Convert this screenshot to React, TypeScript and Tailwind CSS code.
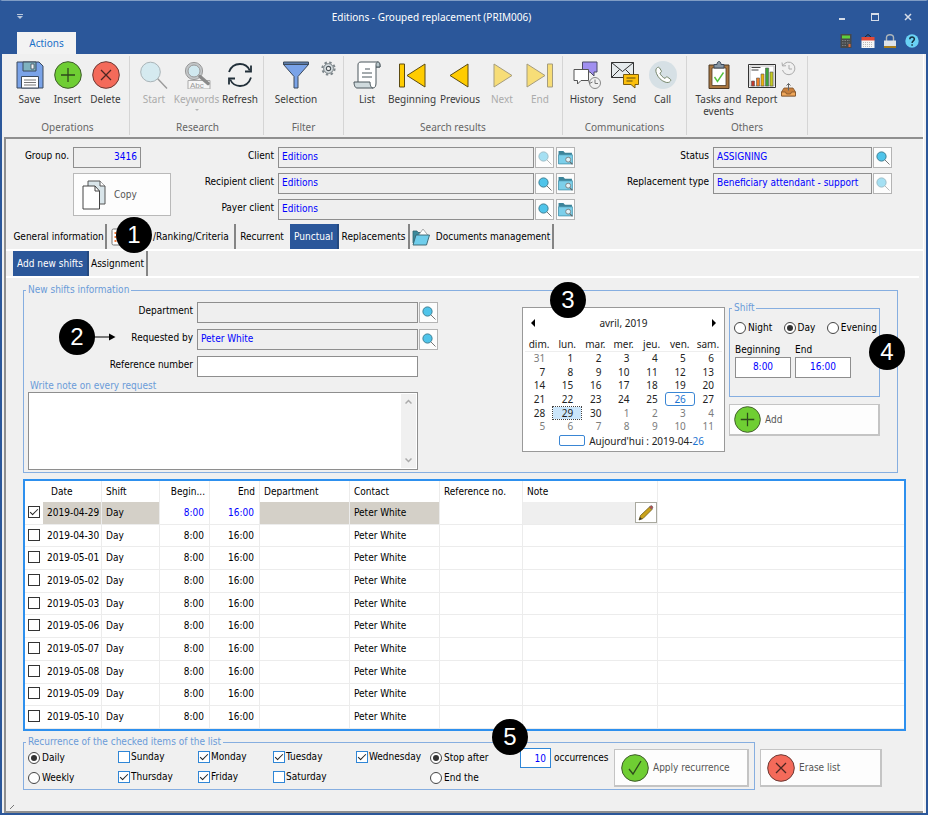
import { useState } from "react";
import type { ReactNode } from "react";

/* ---------- icons ---------- */

function Svg({ size = 28, box = 28, faded = false, children }: { size?: number; box?: number; faded?: boolean; children: ReactNode }) {
  return (
    <svg width={size} height={size} viewBox={`0 0 ${box} ${box}`} fill="none" aria-hidden="true" className={faded ? "shrink-0 opacity-50" : "shrink-0"}>
      {children}
    </svg>
  );
}

const SaveIcon = () => (
  <Svg>
    <path d="M1 1h22l4 4v22H1z" fill="#7aa3e8" stroke="#3c4a5c" />
    <path d="M7 1h13v9H7z" fill="#7fb3c0" stroke="#3c4a5c" />
    <path d="M15 3h3v5h-3z" fill="#f0f5f6" stroke="#3c4a5c" strokeWidth=".8" />
    <path d="M5.500 15.500h17V27h-17z" fill="#fff" stroke="#3c4a5c" />
    <path d="M8 19h12M8 21.500h12M8 24h12" stroke="#777" />
  </Svg>
);

const PlusIcon = ({ size = 28 }: { size?: number }) => (
  <Svg size={size}>
    <circle cx="14" cy="14" r="13.300" fill="#6fce33" stroke="#3f5b2b" />
    <path d="M14 7v14M7 14h14" stroke="#2e4a1c" strokeWidth="1.300" />
  </Svg>
);

const CrossIcon = () => (
  <Svg>
    <circle cx="14" cy="14" r="13.300" fill="#f46a5a" stroke="#6b3a35" />
    <path d="M9 9l10 10M19 9L9 19" stroke="#4c2622" strokeWidth="1.300" />
  </Svg>
);

const CheckIcon = () => (
  <Svg>
    <circle cx="14" cy="14" r="13.300" fill="#6fce33" stroke="#3f5b2b" />
    <path d="M8 15l4 5 8-13" stroke="#2e4a1c" strokeWidth="1.300" />
  </Svg>
);

const MagnifierIcon = () => (
  <Svg>
    <path d="M17.500 17.500L27 27.500" stroke="#9a9a9a" strokeWidth="1.400" />
    <circle cx="10.500" cy="11" r="9.800" fill="#d5eaf0" stroke="#a9b4b8" />
  </Svg>
);

const KeywordsIcon = () => (
  <Svg>
    <circle cx="11" cy="10" r="8.600" fill="#c3c7c9" stroke="#999" />
    <circle cx="11" cy="10" r="6" fill="#d0e8ef" stroke="#999" />
    <path d="M5 19.500h22V28H5z" fill="#f6f6f6" stroke="#aaa" />
    <path d="M17 15.500l8 7" stroke="#8a8a8a" strokeWidth="3.500" strokeLinecap="round" />
    <text x="7" y="27" fontSize="8" fill="#9a9a9a" fontFamily="Liberation Sans">Abc</text>
  </Svg>
);

const RefreshIcon = () => (
  <Svg>
    <path d="M3 11C5 5.500 9 3 14 3c4.500 0 8 2.500 9.800 6.500M25 16.500C23 22.500 19 25 14 25c-4.500 0-8-2.500-9.800-6.500" stroke="#22303a" strokeWidth="1.800" />
    <path d="M25 4.500v6h-6M3 23.500v-6h6" stroke="#22303a" strokeWidth="1.800" />
  </Svg>
);

const FunnelIcon = () => (
  <Svg>
    <path d="M1.500 3.500L12 15.500V27h4V15.500L26.500 3.500z" fill="#7aa3e8" stroke="#3c4a5c" />
    <path d="M1.500 1h25v2.500h-25z" fill="#5d7ca8" stroke="#3c4a5c" />
  </Svg>
);

const GearIcon = () => (
  <Svg size={15} box={16}>
    <circle cx="8" cy="8" r="6.600" stroke="#7d868b" strokeWidth="2" strokeDasharray="2.600 2.580" />
    <circle cx="8" cy="8" r="5.200" fill="#d7dee1" stroke="#6c757a" />
    <circle cx="8" cy="8" r="2.300" fill="#f0f0f0" stroke="#4a5359" strokeWidth="1.200" />
  </Svg>
);

const ListIcon = () => (
  <Svg>
    <path d="M5 21V4c0-2 1-3 3-3h17c2 0 2 5 2 5h-4v16c0 3-1 5-3 5" fill="#fff" stroke="#4b565c" />
    <path d="M23 6V3.500C23 2 24 1 25 1s2 1 2 3v2z" fill="#b9c7cb" stroke="#4b565c" />
    <path d="M1 21h16c0 3 1 6 3 6H4c-2 0-3-3-3-6z" fill="#cfdadd" stroke="#4b565c" />
    <path d="M12 8h5M9 12h10M9 16h10" stroke="#4b565c" />
  </Svg>
);

const BackIcon = ({ bar = false }: { bar?: boolean }) => (
  <Svg>
    <path d={bar ? "M27 3v23L9 14.500z" : "M22 3v23L4 14.500z"} fill="#fc0" stroke="#5c4a10" />
    {bar && <path d="M1.500 3h5v23h-5z" fill="#fc0" stroke="#5c4a10" />}
  </Svg>
);

const ForwardIcon = ({ bar = false }: { bar?: boolean }) => (
  <Svg faded>
    <path d={bar ? "M1 3v23l18-11.500z" : "M6 3v23l18-11.500z"} fill="#fc0" stroke="#5c4a10" />
    {bar && <path d="M21.500 3h5v23h-5z" fill="#fc0" stroke="#5c4a10" />}
  </Svg>
);

const HistoryIcon = () => (
  <Svg>
    <path d="M9.500 1H24v10h-3v4l-4-4H9.500z" fill="#a08ff0" stroke="#4b4a66" />
    <path d="M1 8.500h14.500v11H8L4.500 23v-3.500H1z" fill="#fff" stroke="#555" />
    <circle cx="22" cy="22" r="5.500" fill="#f0f0f0" stroke="#888" />
    <path d="M22 18.500V22.500h3M15.500 19l1 3.500 3-1.500" stroke="#777" />
  </Svg>
);

const SendIcon = () => (
  <Svg>
    <path d="M.500 1.500h22v15H.500z" fill="#e6ebed" stroke="#333" />
    <path d="M.500 1.500l11 9 11-9M.500 16.500l8-8M22.500 16.500l-8-8" stroke="#333" />
    <path d="M12.500 13.500h15v10H24v3.500l-4-3.500h-7.500z" fill="#fbbf0c" stroke="#7a5c10" />
    <path d="M15.500 17h9M15.500 20h6" stroke="#5c4a10" />
  </Svg>
);

const CallIcon = () => (
  <Svg>
    <circle cx="14" cy="14" r="14" fill="#d6e0e5" />
    <path d="M8.500 6.500c-2 1-2 3.500-1 6 1.800 4.200 4.500 7 8.500 8.500 2.500 1 4.500.5 5.500-1 .5-.8.300-1.500-.400-2l-2.600-1.900c-.7-.4-1.300-.3-1.800.4l-.6.900c-2-.6-4.500-3.200-5.200-5.300l1-.7c.6-.5.700-1.100.3-1.800l-1.700-2.700c-.5-.7-1.200-.8-2-.4z" fill="#fff" stroke="#6a7a5c" strokeWidth=".9" />
  </Svg>
);

const TasksIcon = () => (
  <Svg>
    <path d="M4 4h20v23.500H4z" fill="#a9763f" stroke="#4f3a24" />
    <path d="M7 7h14v17.500H7z" fill="#fff" stroke="#4f3a24" strokeWidth=".8" />
    <path d="M9 7V3.500h3C12 1.500 13 .500 14 .500s2 1 2 3h3V7z" fill="#8796a3" stroke="#3c4a5c" />
    <path d="M9.500 16l3 4.500 6-9" stroke="#54c23c" strokeWidth="1.400" />
  </Svg>
);

const ReportIcon = () => (
  <Svg>
    <path d="M.500 3.500h27v23H.500z" fill="#fff" stroke="#333" />
    <path d="M2 5h24v20H2z" stroke="#bbb" />
    <path d="M3.500 6.500h9M3.500 9h7" stroke="#444" />
    <path d="M3.500 20h3v5h-3z" fill="#c0392b" stroke="#555" strokeWidth=".6" />
    <path d="M8.500 17h3v8h-3z" fill="#ee7d22" stroke="#555" strokeWidth=".6" />
    <path d="M13 13h3v12h-3z" fill="#f0b20c" stroke="#555" strokeWidth=".6" />
    <path d="M17.500 7h3.200v18h-3.200z" fill="#3da33b" stroke="#555" strokeWidth=".6" />
    <path d="M22 11h3v14h-3z" fill="#c6cc1f" stroke="#555" strokeWidth=".6" />
  </Svg>
);

const ClockIcon = () => (
  <Svg size={15} box={15}>
    <path d="M2 4.500A6.300 6.300 0 1 1 1.500 9" stroke="#aaa" />
    <path d="M1 1.500L1.500 5l3.500-.3M8 4v4h3" stroke="#aaa" />
  </Svg>
);

const OutboxIcon = () => (
  <Svg size={15} box={15}>
    <path d="M3 6h9l2.500 4v4H.500v-4z" fill="#c9803c" stroke="#7d5228" strokeWidth=".8" />
    <path d="M.500 10h4l1 2h4l1-2h4v4H.500z" fill="#f0a75a" stroke="#7d5228" strokeWidth=".8" />
    <path d="M7.500 8.500V1.500M5.500 3.500l2-2 2 2" stroke="#666" />
  </Svg>
);

const SearchIcon = ({ faded = false }: { faded?: boolean }) => (
  <Svg size={14} box={14} faded={faded}>
    <path d="M8.500 8.500L13.500 13.500" stroke="#777" />
    <circle cx="5.500" cy="5.500" r="4.600" fill="#4fc4ea" stroke="#3c7f94" />
  </Svg>
);

const FolderSearchIcon = () => (
  <Svg size={15} box={14}>
    <path d="M.500 1h4.500l1.500 1.500h6.500v10.500H.500z" fill="#3c8399" />
    <path d="M.500 4.500h13v8.500H.500z" fill="#7ccfea" stroke="#4a94aa" strokeWidth=".7" />
    <circle cx="9.500" cy="9" r="2.300" fill="#e4f3f8" stroke="#777" strokeWidth=".8" />
    <path d="M11.200 11l2.300 2.500" stroke="#666" />
  </Svg>
);

const OpenFolderIcon = () => (
  <Svg size={18} box={18}>
    <path d="M1 3h4l1 1.500h7V15H1z" fill="#3b8a9c" stroke="#2d6270" strokeWidth=".8" />
    <path d="M6 8l5-7 5.500 7z" fill="#fff" stroke="#999" strokeWidth=".8" />
    <path d="M4 7h13.500L14.500 17H1z" fill="#6fcdeb" stroke="#37606c" strokeWidth=".9" />
  </Svg>
);

const CopyIcon = () => (
  <svg width="24" height="30" viewBox="0 0 24 30" fill="none" aria-hidden="true">
    <path d="M6 1h12l5 5v18H6z" fill="#d9e5ea" stroke="#555" />
    <path d="M18 1v5h5" fill="#fff" stroke="#555" />
    <path d="M1 6h12l4.500 5v18H1z" fill="#fff" stroke="#444" />
    <path d="M13 6v5h4.500" stroke="#444" />
  </svg>
);

const PencilIcon = () => (
  <Svg size={16} box={16}>
    <path d="M1 15l1.500-4.500L11.500 2l2.500 2.500L5 13.500z" fill="#c9a21c" stroke="#6e5a18" strokeWidth=".8" />
    <path d="M11.500 2l1.200-1.200c1-.6 2.700 1 2 2.200L13.800 4.200z" fill="#c84a48" stroke="#666" strokeWidth=".8" />
    <path d="M1 15l1-3 2 2z" fill="#333" />
  </Svg>
);

const CalculatorIcon = () => (
  <Svg size={14} box={14}>
    <path d="M1.500 0h11v14h-11z" fill="#46494a" />
    <path d="M3 1.500h8v3H3z" fill="#5fd03a" />
    <path d="M3 6.500h8M3 9h8M3 11.500h5" stroke="#7d8284" strokeDasharray="1.500 1" />
    <path d="M9.500 10h2v3h-2z" fill="#e0693a" />
  </Svg>
);

const CalendarIcon = () => (
  <Svg size={14} box={14}>
    <path d="M4 3l3-2.500L10 3" stroke="#222" />
    <path d="M.500 3h13v4H.500z" fill="#e04a38" />
    <path d="M.500 6.500h13V14H.500z" fill="#f5f5f5" />
    <path d="M2 8.500h10M2 10.500h10M2 12.500h10" stroke="#bbb" strokeDasharray="1 1" />
  </Svg>
);

const LockIcon = () => (
  <Svg size={14} box={14}>
    <path d="M3.500 7V3.500C3.500 1.500 5 .700 7 .700s3.500.8 3.500 2.800V7" stroke="#aeb6ba" strokeWidth="1.400" />
    <path d="M1 6.500h12V12H1z" fill="#dde3ea" />
    <path d="M1 12h12v2H1z" fill="#a87f1f" />
  </Svg>
);

const HelpIcon = () => (
  <Svg size={14} box={14}>
    <circle cx="7" cy="7" r="6.700" fill="#6ad2f5" />
    <path d="M4.800 5.300c0-3 4.600-2.900 4.600-.2C9.400 7 7.100 6.800 7.100 9M7.100 10.200v1.600" stroke="#173544" strokeWidth="1.500" />
  </Svg>
);

const ChoicesIcon = () => (
  <Svg size={18} box={18}>
    <rect x="1" y="1" width="16" height="16" rx="1.500" fill="#fff" stroke="#777" />
    <path d="M3.500 5h2M3.500 9h2M3.500 13h2" stroke="#f07a3a" strokeWidth="2" />
    <path d="M7.500 5h7M7.500 9h7M7.500 13h7" stroke="#777" />
  </Svg>
);

/* ---------- shared pieces ---------- */

function Badge({ n, place }: { n: number; place: string }) {
  return (
    <span className={`absolute z-10 flex size-9 items-center justify-center rounded-full bg-black font-['Liberation_Sans',sans-serif] text-2xl leading-6 text-white ${place}`}>
      {n}
    </span>
  );
}

function RibbonButton({ icon, label, width, disabled = false, arrow = false }: { icon: ReactNode; label: string; width: string; disabled?: boolean; arrow?: boolean }) {
  return (
    <button type="button" disabled={disabled} className={`flex shrink-0 flex-col items-center pt-[7px] leading-3 ${width} ${disabled ? "text-[#ababab]" : "text-[#3b3b3b]"}`}>
      {icon}
      <span className="mt-1">{label}</span>
      {arrow && <span className="mt-1 border-x-2 border-t-2 border-x-transparent border-t-[#b5b5b5]" />}
    </button>
  );
}

function RibbonGroup({ label, width, children }: { label: string; width: string; children: ReactNode }) {
  return (
    <section aria-label={label} className={`flex shrink-0 flex-col ${width}`}>
      <div className="flex flex-1 justify-center">{children}</div>
      <div className="pb-1 text-center leading-3 text-[#666]">{label}</div>
    </section>
  );
}

const Divider = () => <div className="my-0.5 w-px shrink-0 bg-[#d5d5d5]" />;

function IconButton({ label, faded = false, children }: { label: string; faded?: boolean; children?: ReactNode }) {
  return (
    <button type="button" aria-label={label} className="flex w-[19px] shrink-0 items-center justify-center self-stretch border border-[#b4b4b4] bg-[#fdfdfd]">
      {children ?? <SearchIcon faded={faded} />}
    </button>
  );
}

const fieldClass = "h-[21px] min-w-0 border border-[#8e8e8e] px-[3px] pb-0.5 text-[#0000ff] outline-none";

function LookupRow({ id, label, value, labelWidth, fieldWidth, faded = false, folder = false }: { id: string; label: string; value: string; labelWidth: string; fieldWidth: string; faded?: boolean; folder?: boolean }) {
  return (
    <div className="flex items-center gap-px">
      <label htmlFor={id} className={`shrink-0 pr-[3px] pb-1 text-right ${labelWidth}`}>{label}</label>
      <input id={id} readOnly defaultValue={value} className={`${fieldClass} bg-[#efefef] ${fieldWidth}`} />
      <IconButton label={`Search ${label}`} faded={faded} />
      {folder && (
        <div className="flex self-stretch pl-px">
          <IconButton label={`Open ${label}`}><FolderSearchIcon /></IconButton>
        </div>
      )}
    </div>
  );
}

function Radio({ name, label, defaultChecked = false }: { name: string; label: string; defaultChecked?: boolean }) {
  return (
    <label className="flex items-center gap-0.5 whitespace-nowrap">
      <input
        type="radio"
        name={name}
        defaultChecked={defaultChecked}
        className="grid size-3 shrink-0 appearance-none place-content-center rounded-full border border-[#444] bg-white checked:before:size-1.5 checked:before:rounded-full checked:before:bg-[#333]"
      />
      {label}
    </label>
  );
}

const checkMark = "appearance-none grid size-3 shrink-0 place-content-center bg-white checked:before:mb-0.5 checked:before:h-1 checked:before:w-2 checked:before:-rotate-45 checked:before:border-b checked:before:border-l checked:before:border-[#222]";

function DayCheck({ label, defaultChecked = false }: { label: string; defaultChecked?: boolean }) {
  return (
    <label className="flex items-center gap-px whitespace-nowrap pb-0.5">
      <input type="checkbox" defaultChecked={defaultChecked} className={`${checkMark} border border-[#2f86d6]`} />
      {label}
    </label>
  );
}

/* ---------- page sections ---------- */

function TitleBar() {
  return (
    <header className="bg-[#2b579a] text-white">
      <div className="flex h-[31px] items-center pr-0.5">
        <div className="flex w-[28px] shrink-0 flex-col items-center pr-[22px] pl-3.5">
          <span className="ml-2 h-px w-1.5 bg-[#b9c6da]" />
          <span className="mt-px ml-2 border-x-3 border-t-3 border-x-transparent border-t-[#b9c6da]" />
        </div>
        <h1 className="flex-1 text-center">Editions - Grouped replacement (PRIM006)</h1>
        <div className="flex shrink-0">
          <button type="button" aria-label="Minimize" className="flex h-5 w-[33px] items-center justify-center"><span className="mt-1 h-0.5 w-1.5 bg-[#d5dce8]" /></button>
          <button type="button" aria-label="Maximize" className="flex h-5 w-[33px] items-center justify-center"><span className="size-2 border border-t-2 border-[#d5dce8]" /></button>
          <button type="button" aria-label="Close" className="flex h-5 w-[33px] items-center justify-center">
            <Svg size={8} box={8}><path d="M1 1l6 6M7 1L1 7" stroke="#d5dce8" strokeWidth="1.500" /></Svg>
          </button>
        </div>
      </div>
      <div className="flex h-[22px] items-start justify-between pr-[7px] pl-[15px]">
        <button type="button" className="h-[22px] w-[59px] bg-[#f3f3f3] text-[#1a70c8]">Actions</button>
        <div className="flex gap-2 pt-0.5">
          <button type="button" aria-label="Calculator"><CalculatorIcon /></button>
          <button type="button" aria-label="Calendar"><CalendarIcon /></button>
          <button type="button" aria-label="Lock"><LockIcon /></button>
          <button type="button" aria-label="Help"><HelpIcon /></button>
        </div>
      </div>
    </header>
  );
}

function Ribbon() {
  return (
    <div className="flex h-[85px] border-b-2 border-[#8f8f8f]">
      <RibbonGroup label="Operations" width="w-[125px] pl-0.5">
        <RibbonButton icon={<SaveIcon />} label="Save" width="w-[38px]" />
        <RibbonButton icon={<PlusIcon />} label="Insert" width="w-[38px]" />
        <RibbonButton icon={<CrossIcon />} label="Delete" width="w-[38px]" />
      </RibbonGroup>
      <Divider />
      <RibbonGroup label="Research" width="w-[133px] pl-0.5">
        <RibbonButton icon={<MagnifierIcon />} label="Start" width="w-[40px]" disabled />
        <RibbonButton icon={<KeywordsIcon />} label="Keywords" width="w-[45px]" disabled arrow />
        <RibbonButton icon={<RefreshIcon />} label="Refresh" width="w-[42px]" />
      </RibbonGroup>
      <Divider />
      <RibbonGroup label="Filter" width="w-[79px]">
        <RibbonButton icon={<FunnelIcon />} label="Selection" width="w-[50px]" />
        <button type="button" aria-label="Filter settings" className="-ml-1 self-start pt-[7px] pl-1"><GearIcon /></button>
      </RibbonGroup>
      <Divider />
      <RibbonGroup label="Search results" width="w-[218px]">
        <RibbonButton icon={<ListIcon />} label="List" width="w-[40px]" />
        <RibbonButton icon={<BackIcon bar />} label="Beginning" width="w-[50px]" />
        <RibbonButton icon={<BackIcon />} label="Previous" width="w-[46px]" />
        <RibbonButton icon={<ForwardIcon />} label="Next" width="w-[38px]" disabled />
        <RibbonButton icon={<ForwardIcon bar />} label="End" width="w-[38px]" disabled />
      </RibbonGroup>
      <Divider />
      <RibbonGroup label="Communications" width="w-[123px]">
        <RibbonButton icon={<HistoryIcon />} label="History" width="w-[38px]" />
        <RibbonButton icon={<SendIcon />} label="Send" width="w-[38px]" />
        <RibbonButton icon={<CallIcon />} label="Call" width="w-[38px]" />
      </RibbonGroup>
      <Divider />
      <RibbonGroup label="Others" width="w-[120px]">
        <RibbonButton icon={<TasksIcon />} label="Tasks and events" width="w-[48px]" />
        <RibbonButton icon={<ReportIcon />} label="Report" width="w-[38px]" />
        <div className="flex flex-col gap-1.5 pt-[7px] pr-1">
          <button type="button" aria-label="Recent"><ClockIcon /></button>
          <button type="button" aria-label="Outbox"><OutboxIcon /></button>
        </div>
      </RibbonGroup>
      <Divider />
    </div>
  );
}

function RequestHeader() {
  return (
    <div className="flex pt-2 pr-[31px]">
      <div className="w-[165px] shrink-0">
        <div className="flex items-center">
          <label htmlFor="group" className="w-[67px] shrink-0 pr-1 pb-1 text-right">Group no.</label>
          <input id="group" readOnly defaultValue="3416" className={`${fieldClass} w-[68px] bg-[#efefef] text-right`} />
        </div>
        <button type="button" className="mt-[5px] ml-[67px] flex h-[43px] w-[98px] items-center gap-2 border border-[#b9b9b9] bg-[#fdfdfd] pl-2 text-[#555]">
          <CopyIcon />
          Copy
        </button>
      </div>
      <div className="flex flex-1 flex-col gap-[5px]">
        <LookupRow id="client" label="Client" value="Editions" labelWidth="w-[106px]" fieldWidth="flex-1" faded folder />
        <LookupRow id="recipient" label="Recipient client" value="Editions" labelWidth="w-[106px]" fieldWidth="flex-1" folder />
        <LookupRow id="payer" label="Payer client" value="Editions" labelWidth="w-[106px]" fieldWidth="flex-1" folder />
      </div>
      <div className="flex shrink-0 flex-col gap-[5px]">
        <LookupRow id="status" label="Status" value="ASSIGNING" labelWidth="w-[137px]" fieldWidth="w-[159px]" />
        <LookupRow id="type" label="Replacement type" value="Beneficiary attendant - support" labelWidth="w-[137px]" fieldWidth="w-[159px]" faded />
      </div>
    </div>
  );
}

const tabClass = "flex h-[25px] shrink-0 items-center justify-center whitespace-nowrap border-r-2";
const idleTab = "border-[#858585]";
const activeTab = "border-[#24497f] bg-[#2b579a] text-white";

function Tabs() {
  return (
    <nav aria-label="Sections">
      <div className="mt-1 flex border-b-2 border-white pl-1.5">
        <button type="button" className={`${tabClass} ${idleTab} w-[95px]`}>General information</button>
        <div className="relative w-[129px] shrink-0">
          <button type="button" aria-label="Ranking and criteria" className={`${tabClass} ${idleTab} w-full justify-start`}>
            <span className="w-[46px] shrink-0 pl-1"><ChoicesIcon /></span>
            /Ranking/Criteria
          </button>
          <Badge n={1} place="-top-[7px] left-[9px]" />
        </div>
        <button type="button" className={`${tabClass} w-[54px] border-transparent`}>Recurrent</button>
        <button type="button" className={`${tabClass} ${activeTab} w-[49px]`}>Punctual</button>
        <button type="button" className={`${tabClass} ${idleTab} w-[71px]`}>Replacements</button>
        <button type="button" className={`${tabClass} ${idleTab} w-[144px] gap-1.5`}>
          <OpenFolderIcon />
          Documents management
        </button>
      </div>
      <div className="mr-1 flex border-b-2 border-white pl-[7px]">
        <button type="button" className={`${tabClass} ${activeTab} w-[76px]`}>Add new shifts</button>
        <button type="button" className={`${tabClass} ${idleTab} w-[59px]`}>Assignment</button>
      </div>
    </nav>
  );
}

const weekdays = ["dim.", "lun.", "mar.", "mer.", "jeu.", "ven.", "sam."];
const firstDay = new Date(2019, 2, 31);
const weeks = Array.from({ length: 6 }, (_, w) =>
  Array.from({ length: 7 }, (_, d) => {
    const date = new Date(firstDay);
    date.setDate(firstDay.getDate() + w * 7 + d);
    return { day: date.getDate(), inMonth: date.getMonth() === 3 };
  }),
);

function Calendar() {
  return (
    <div className="relative mt-[11px] ml-auto h-[145px] w-[203px] shrink-0 border border-[#999] bg-white px-0.5 font-['Noto_Sans',sans-serif] text-[#222]">
      <Badge n={3} place="-top-[26px] left-[27px]" />
      <div className="flex h-[30px] items-center justify-between px-1.5">
        <button type="button" aria-label="Previous month" className="border-y-4 border-r-4 border-y-transparent border-r-black" />
        <span>avril, 2019</span>
        <button type="button" aria-label="Next month" className="border-y-4 border-l-4 border-y-transparent border-l-black" />
      </div>
      <table className="h-[95px] w-full table-fixed">
        <thead>
          <tr>{weekdays.map((d) => <th key={d} className="h-[13px] border-b border-[#eee] p-0 font-normal leading-3">{d}</th>)}</tr>
        </thead>
        <tbody>
          {weeks.map((week, w) => (
            <tr key={w}>
              {week.map(({ day, inMonth }) => {
                const today = inMonth && day === 26;
                const picked = inMonth && day === 29;
                return (
                  <td key={day} className={`p-0 text-right leading-3 ${inMonth ? "" : "text-[#7c7c7c]"}`}>
                    <div className={`h-3 pr-2 ${today ? "rounded-xs text-[#1a73d0] outline outline-[#3a86d4]" : ""} ${picked ? "bg-[#cbe6fb] outline outline-dotted outline-[#444]" : ""}`}>{day}</div>
                  </td>
                );
              })}
            </tr>
          ))}
        </tbody>
      </table>
      <div className="flex h-[15px] items-center justify-center gap-1 pl-4">
        <span className="h-[11px] w-[26px] rounded-xs border border-[#3a86d4]" />
        <span>Aujourd'hui : 2019-04-<span className="text-[#1a73d0]">26</span></span>
      </div>
    </div>
  );
}

const groupClass = "border border-[#86aee0]";
const legendClass = "ml-0.5 h-3 px-0.5 leading-3 text-[#6a9bd8]";

function ShiftPanel() {
  return (
    <div className="mt-1.5 w-[151px] shrink-0">
      <fieldset className={`${groupClass} relative h-[95px]`}>
        <legend className={legendClass}>Shift</legend>
        <Badge n={4} place="top-5 -right-[26px]" />
        <div className="flex justify-between pt-2 pr-0.5 pl-1">
          <Radio name="shift" label="Night" />
          <Radio name="shift" label="Day" defaultChecked />
          <Radio name="shift" label="Evening" />
        </div>
        <div className="flex gap-1 pt-2.5 pl-[5px]">
          <label>
            Beginning
            <input defaultValue="8:00" className={`${fieldClass} mt-px block w-14 bg-white text-center`} />
          </label>
          <label>
            End
            <input defaultValue="16:00" className={`${fieldClass} mt-px block w-14 bg-white text-center`} />
          </label>
        </div>
      </fieldset>
      <button type="button" className="mt-[7px] flex h-8 w-full items-center gap-1 border border-r-2 border-b-2 border-[#c4c4c4] bg-[#fdfdfd] pl-1 text-[#555]">
        <PlusIcon size={27} />
        Add
      </button>
    </div>
  );
}

function NewShifts() {
  return (
    <fieldset className={`${groupClass} mt-1.5 mr-2`}>
      <legend className={legendClass}>New shifts information</legend>
      <div className="flex gap-1 pr-[17px] pb-0.5 pl-1">
        <div className="w-[410px] shrink-0 pt-1.5">
          <div className="flex flex-col gap-1.5">
            <LookupRow id="department" label="Department" value="" labelWidth="w-[168px]" fieldWidth="flex-1" />
            <div className="relative">
              <LookupRow id="requested" label="Requested by" value="Peter White" labelWidth="w-[168px]" fieldWidth="flex-1" />
              <Badge n={2} place="-top-2.5 left-[31px]" />
              <svg width="22" height="8" viewBox="0 0 22 8" aria-hidden="true" className="absolute top-1 left-[66px]">
                <path d="M0 4h16" stroke="#000" />
                <path d="M15 .500L21.500 4 15 7.500z" />
              </svg>
            </div>
            <div className="flex items-center gap-px pr-5">
              <label htmlFor="reference" className="w-[168px] shrink-0 pr-[3px] pb-1 text-right">Reference number</label>
              <input id="reference" className={`${fieldClass} flex-1 bg-white`} />
            </div>
          </div>
          <label htmlFor="note" className="mt-[3px] block pl-0.5 text-[#6a9bd8]">Write note on every request</label>
          <div className="mr-5 flex h-[78px] border border-[#8e8e8e] bg-white">
            <textarea id="note" className="min-w-0 flex-1 resize-none px-1 outline-none" />
            <div className="m-px flex w-[15px] flex-col items-center justify-between bg-[#f0f0f0] py-1">
              <Svg size={7} box={7}><path d="M.500 5.500l3-3 3 3" stroke="#aaa" strokeWidth="1.500" /></Svg>
              <Svg size={7} box={7}><path d="M.500 1.500l3 3 3-3" stroke="#aaa" strokeWidth="1.500" /></Svg>
            </div>
          </div>
        </div>
        <Calendar />
        <ShiftPanel />
      </div>
    </fieldset>
  );
}

const dates = ["2019-04-29", "2019-04-30", "2019-05-01", "2019-05-02", "2019-05-03", "2019-05-06", "2019-05-07", "2019-05-08", "2019-05-09", "2019-05-10"];
const line = "border-r border-b border-[#ececec]";

function ShiftTable() {
  const [checked, setChecked] = useState<string[]>([dates[0]]);
  const toggle = (d: string) => setChecked((c) => (c.includes(d) ? c.filter((x) => x !== d) : [...c, d]));
  return (
    <div className="mt-1.5 border-2 border-[#2e90ee] bg-white">
      <table className="h-[248px] w-full table-fixed border-separate border-spacing-0 text-left">
        <colgroup>
          <col className="w-[18px]" />
          <col className="w-[59px]" />
          <col className="w-[58px]" />
          <col className="w-[50px]" />
          <col className="w-[50px]" />
          <col className="w-[90px]" />
          <col className="w-[90px]" />
          <col className="w-[83px]" />
          <col className="w-[135px]" />
          <col />
        </colgroup>
        <thead>
          <tr className="h-[21px] [&>th]:border-r [&>th]:border-[#ececec] [&>th]:p-0 [&>th]:px-1 [&>th]:font-normal">
            <th aria-label="Selected" className="border-r-0!" />
            <th className="pl-2!">Date</th>
            <th>Shift</th>
            <th className="text-right">Begin...</th>
            <th className="text-right">End</th>
            <th>Department</th>
            <th>Contact</th>
            <th>Reference no.</th>
            <th>Note</th>
            <th aria-label="Empty" className="border-r-0!" />
          </tr>
        </thead>
        <tbody>
          {dates.map((date, i) => {
            const shade = i === 0 ? "bg-[#d4d0c8]" : "";
            const ink = i === 0 ? "text-[#0000ff]" : "";
            return (
              <tr key={date} className="h-[22px] [&>td]:p-0 [&>td]:px-1">
                <td className="border-b border-[#ececec] px-[3px]! pb-0.5!">
                  <input type="checkbox" aria-label={`Select ${date}`} checked={checked.includes(date)} onChange={() => toggle(date)} className={`${checkMark} border border-[#333]`} />
                </td>
                <td className={`${line} ${shade} whitespace-nowrap`}>{date}</td>
                <td className={`${line} ${shade}`}>Day</td>
                <td className={`${line} ${ink} pr-[5px]! text-right`}>8:00</td>
                <td className={`${line} ${ink} pr-[5px]! text-right`}>16:00</td>
                <td className={`${line} ${shade}`} />
                <td className={`${line} ${shade}`}>Peter White</td>
                <td className={line} />
                <td className={`${line} ${i === 0 ? "bg-[#efefef] p-0!" : ""}`}>
                  {i === 0 && (
                    <button type="button" aria-label="Edit note" className="ml-auto flex h-[21px] w-[22px] items-center justify-center border border-[#a9a99f] bg-white">
                      <PencilIcon />
                    </button>
                  )}
                </td>
                <td className="border-b border-[#ececec]" />
              </tr>
            );
          })}
        </tbody>
      </table>
    </div>
  );
}

const bigButton = "flex h-[38px] items-center gap-1 border border-r-2 border-b-2 border-[#c4c4c4] bg-[#fdfdfd] pl-1.5 text-[#555]";

function Recurrence() {
  return (
    <div className="mt-[5px] flex items-start gap-[5px]">
      <fieldset className={`${groupClass} relative w-[732px] shrink-0`}>
        <legend className={legendClass}>Recurrence of the checked items of the list</legend>
        <Badge n={5} place="-top-[29px] left-[468px]" />
        <div className="grid grid-cols-[90px_80px_75px_83px_74px_90px_94px_135px] grid-rows-[20px_20px] items-center pb-px pl-1">
          <Radio name="frequency" label="Daily" defaultChecked />
          <DayCheck label="Sunday" />
          <DayCheck label="Monday" defaultChecked />
          <DayCheck label="Tuesday" defaultChecked />
          <DayCheck label="Wednesday" defaultChecked />
          <Radio name="until" label="Stop after" defaultChecked />
          <label className="flex items-center gap-[3px]">
            <input defaultValue="10" className="h-5 w-[31px] border border-[#2f86d6] bg-white px-1 text-right text-[#0000ff] outline-none" />
            occurrences
          </label>
          <button type="button" className={`${bigButton} row-span-2`}>
            <CheckIcon />
            Apply recurrence
          </button>
          <Radio name="frequency" label="Weekly" />
          <DayCheck label="Thursday" defaultChecked />
          <DayCheck label="Friday" defaultChecked />
          <DayCheck label="Saturday" />
          <span />
          <Radio name="until" label="End the" />
        </div>
      </fieldset>
      <button type="button" className={`${bigButton} mt-[13px] w-[122px]`}>
        <CrossIcon />
        Erase list
      </button>
    </div>
  );
}

export default function App() {
  return (
    <div className="flex min-h-screen flex-col border-x-2 border-t border-b-2 border-[#2b579a] border-t-[#7f9cc4] bg-[#f0f0f0] font-['Noto_Sans',sans-serif] text-[10px] leading-3 text-black">
      <TitleBar />
      <div className="mx-0.5 flex flex-1 flex-col border-r border-white">
        <Ribbon />
        <main className="flex flex-1 flex-col border-b-2 border-l-2 border-[#8f8f8f] font-['DejaVu_Sans_Condensed','DejaVu_Sans',sans-serif]">
          <RequestHeader />
          <Tabs />
          <div className="pr-[17px] pl-[17px]">
            <NewShifts />
            <ShiftTable />
            <Recurrence />
          </div>
          <div className="mt-auto pb-0.5 pl-1">
            <Svg size={4} box={4}><path d="M0 4l4-4" stroke="#777" /></Svg>
          </div>
        </main>
      </div>
    </div>
  );
}
